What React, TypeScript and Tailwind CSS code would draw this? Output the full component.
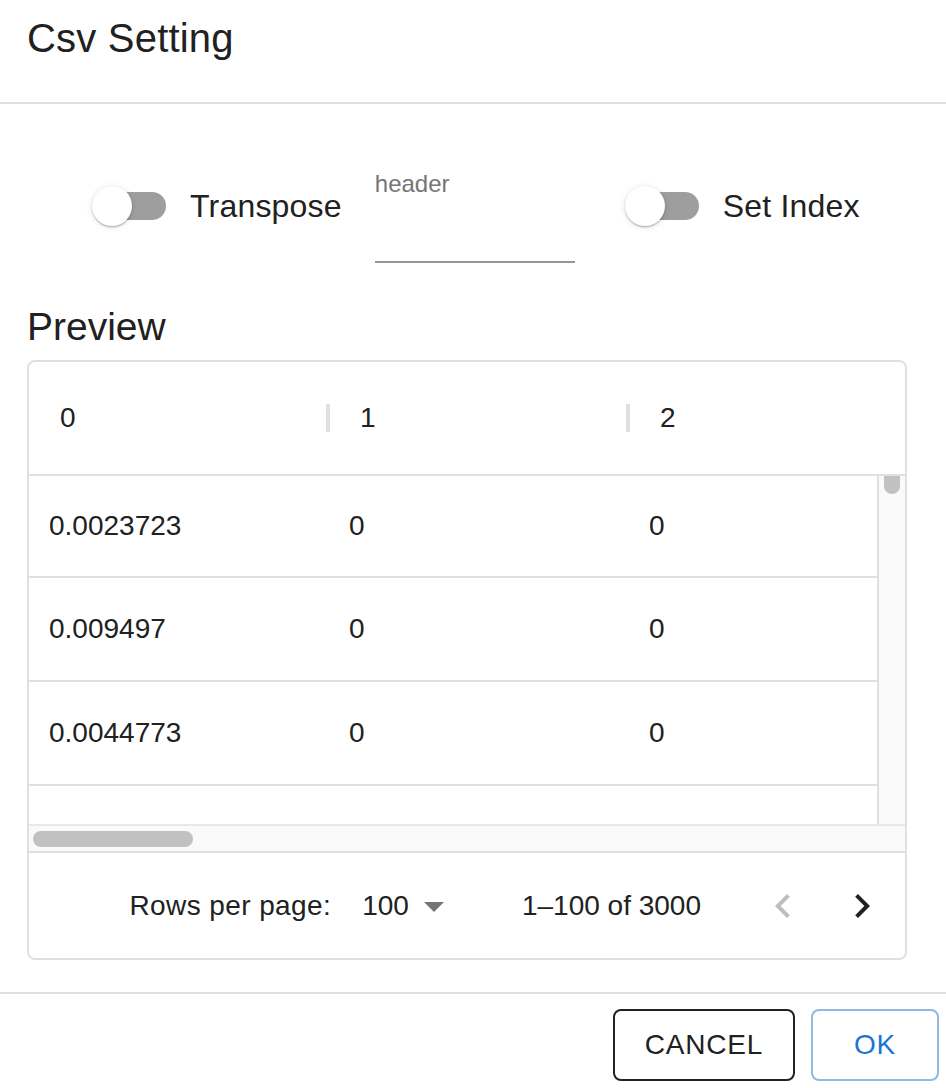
import React from 'react';

const rows = [
  ['0.0023723', '0', '0'],
  ['0.009497', '0', '0'],
  ['0.0044773', '0', '0'],
  ['', '', ''],
];

const Toggle: React.FC<{ label: string }> = ({ label }) => (
  <div className="flex items-center h-[40px]">
    <div className="relative w-[74px] h-[40px] shrink-0">
      <div className="absolute left-[6px] top-[6px] w-[68px] h-[28px] rounded-full bg-[#9e9e9e]" />
      <div className="absolute left-0 top-0 w-[40px] h-[40px] rounded-full bg-white shadow-[0_2px_2px_-1px_rgba(0,0,0,0.2),0_1px_2px_0_rgba(0,0,0,0.14),0_1px_6px_0_rgba(0,0,0,0.12)]" />
    </div>
    <span className="ml-[24px] text-[32px] leading-[40px] tracking-[0.2px] text-[#212121] whitespace-nowrap">{label}</span>
  </div>
);

const ChevronLeft = ({ className }: { className?: string }) => (
  <svg viewBox="0 0 24 24" className={className} fill="currentColor">
    <path d="M15.41 16.59 10.83 12l4.58-4.59L14 6l-6 6 6 6z" />
  </svg>
);

const ChevronRight = ({ className }: { className?: string }) => (
  <svg viewBox="0 0 24 24" className={className} fill="currentColor">
    <path d="M8.59 16.59 13.17 12 8.59 7.41 10 6l6 6-6 6z" />
  </svg>
);

const ArrowDropDown = ({ className }: { className?: string }) => (
  <svg viewBox="0 0 24 24" className={className} fill="currentColor">
    <path d="M7 10l5 5 5-5z" />
  </svg>
);

export default function App() {
  return (
    <div className="w-[946px] h-[1088px] bg-white overflow-hidden flex flex-col text-[#212121] font-['Liberation_Sans',Arial,sans-serif]">
      {/* Title */}
      <div className="h-[104px] shrink-0 border-b-2 border-[#e0e0e0] px-[27px] pt-[14px]">
        <h2 className="text-[40px] leading-[48px] tracking-[0.2px] font-normal">Csv Setting</h2>
      </div>

      <div className="px-[27px] flex flex-col">
        {/* Options row */}
        <div className="mt-[68px] flex items-start pl-[65px]">
          <div className="mt-[14px]">
            <Toggle label="Transpose" />
          </div>
          <div className="ml-[33px] w-[200px]">
            <div className="text-[24px] leading-[24px] text-[#757575]">header</div>
            <div className="h-[67px] border-b-2 border-[#949494]" />
          </div>
          <div className="ml-[50px] mt-[14px]">
            <Toggle label="Set Index" />
          </div>
        </div>

        {/* Preview */}
        <div className="mt-[42px] text-[39px] leading-[44px]">Preview</div>

        <div className="mt-[11px] w-[880px] h-[600px] border-2 border-[#e0e0e0] rounded-[8px] overflow-hidden flex flex-col">
          {/* Header */}
          <div className="h-[114px] shrink-0 border-b-2 border-[#e0e0e0] flex">
            {['0', '1', '2'].map((h, i) => (
              <div key={h} className="w-[300px] shrink-0 flex items-center justify-between pl-[31px]">
                <span className="text-[28px]">{h}</span>
                {i < 2 && <div className="w-[4px] h-[28px] bg-[#e0e0e0] mr-[-1px]" />}
              </div>
            ))}
          </div>

          {/* Body */}
          <div className="flex">
            <div className="flex-1 h-[348px] overflow-hidden">
              {rows.map((r, i) => (
                <div
                  key={i}
                  className={`${i === 0 ? 'h-[102px]' : 'h-[104px]'} border-b-2 border-[#e0e0e0] flex items-center`}
                >
                  {r.map((c, j) => (
                    <div key={j} className="w-[300px] shrink-0 pl-[20px] text-[28px]">{c}</div>
                  ))}
                </div>
              ))}
            </div>
            <div className="w-[28px] h-[348px] shrink-0 bg-[#fafafa] border-l-2 border-[#e0e0e0] pl-[5px]">
              <div className="w-[16px] h-[18px] rounded-b-full rounded-t-[4px] bg-[#c1c1c1]" />
            </div>
          </div>
          <div className="h-[27px] shrink-0 bg-[#fafafa] border-t-2 border-[#e8e8e8] flex items-center pl-[4px]">
            <div className="w-[160px] h-[16px] rounded-full bg-[#c1c1c1]" />
          </div>

          {/* Pagination */}
          <div className="flex-1 border-t-2 border-[#e0e0e0] flex items-center justify-end pr-[19px] text-[28px]">
            <span className="tracking-[0.4px]">Rows per page:</span>
            <span className="ml-[31px]">100</span>
            <ArrowDropDown className="w-[48px] h-[48px] text-[#757575] ml-[1px]" />
            <span className="ml-[64px]">1–100 of 3000</span>
            <ChevronLeft className="ml-[58px] w-[48px] h-[48px] text-[#bdbdbd]" />
            <ChevronRight className="ml-[31px] w-[48px] h-[48px] text-[#212121]" />
          </div>
        </div>
      </div>

      {/* Actions */}
      <div className="mt-[32px] border-t-2 border-[#e0e0e0] flex justify-end gap-[16px] pt-[15px] pr-[7px]">
        <button className="w-[182px] h-[72px] border-2 border-[#212121] rounded-[8px] text-[28px] tracking-[0.8px] text-[#212121] bg-white">
          CANCEL
        </button>
        <button className="w-[128px] h-[72px] border-2 border-[#8fb8e6] rounded-[8px] text-[28px] tracking-[0.8px] text-[#1976d2] bg-white">
          OK
        </button>
      </div>
    </div>
  );
}
